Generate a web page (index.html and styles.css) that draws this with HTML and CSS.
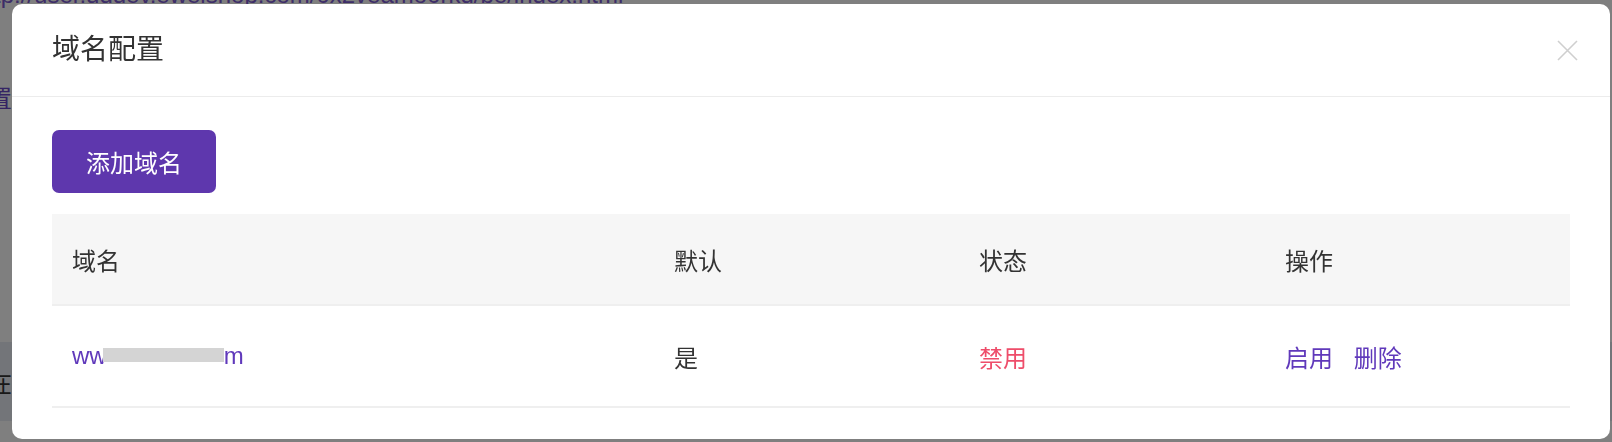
FILE: index.html
```html
<!DOCTYPE html>
<html>

<head>
    <meta charset="utf-8">
    <title>域名配置</title>
    <link rel="stylesheet" href="styles.css">
</head>

<body>
    <div class="page">
        <div class="page-url">http://user.dddev.eweishop.com/0x2veamo0rkd/be/index.html</div>
        <div class="page-nav">设置</div>
        <div class="page-row"><span>存在</span></div>
    </div>

    <div class="mask"></div>

    <div class="modal">
        <div class="modal-header">
            <h2 class="modal-title">域名配置</h2>
            <a class="modal-close" href="#">
                <svg width="21" height="21" viewBox="0 0 21 21">
                    <path d="M1 1 L20 20 M20 1 L1 20" stroke="#cfcfcf" stroke-width="1.6" fill="none" />
                </svg>
            </a>
        </div>

        <div class="modal-body">
            <button class="but add">添加域名</button>

            <table class="table">
                <colgroup>
                    <col style="width: 602px">
                    <col style="width: 305px">
                    <col style="width: 306px">
                    <col>
                </colgroup>
                <thead>
                    <tr>
                        <th>域名</th>
                        <th>默认</th>
                        <th>状态</th>
                        <th>操作</th>
                    </tr>
                </thead>
                <tbody>
                    <tr>
                        <td><a class="link" href="#">ww<span class="blur"></span>m</a></td>
                        <td>是</td>
                        <td><span class="off">禁用</span></td>
                        <td>
                            <a class="link" href="#">启用</a>
                            <a class="link act" href="#">删除</a>
                        </td>
                    </tr>
                </tbody>
            </table>
        </div>
    </div>
</body>

</html>
```

FILE: styles.css
```css
body {
    margin: 0;
    padding: 0;
    height: 442px;
    overflow: hidden;
    background-color: #ffffff;
    font-family: "Liberation Sans", "Noto Sans CJK SC", sans-serif;
}

/* page behind the dialog */

.page {
    display: flex;
    flex-direction: column;
}

.page-url {
    margin: -17px 0 0 -26px;
    font-size: 24px;
    line-height: 24px;
    color: #7a5ad0;
    white-space: nowrap;
}

.page-nav {
    margin: 78px 0 0 -36px;
    font-size: 24px;
    line-height: 28px;
    color: #6a48c8;
}

.page-row {
    margin-top: 229px;
    height: 79px;
    display: flex;
    align-items: center;
    background-color: #e6ebf3;
    font-size: 24px;
    color: #333333;
}

.page-row span {
    margin-left: -36px;
}

.mask {
    position: fixed;
    top: 0;
    left: 0;
    right: 0;
    bottom: 0;
    background-color: rgba(0, 0, 0, 0.5);
}

/* dialog */

.modal {
    position: fixed;
    left: 12px;
    top: 4px;
    width: 1598px;
    height: 435px;
    background-color: #ffffff;
    border-radius: 10px;
    overflow: hidden;
}

.modal-header {
    height: 92px;
    border-bottom: 1px solid #ececec;
    display: flex;
    align-items: center;
    justify-content: space-between;
    padding: 0 32px 0 40px;
}

.modal-title {
    margin: 0;
    font-size: 28px;
    font-weight: normal;
    color: #333333;
    line-height: 36px;
}

.modal-close {
    display: block;
    width: 21px;
    height: 21px;
}

.modal-close svg {
    display: block;
}

.modal-body {
    padding: 33px 40px 0 40px;
}

/* buttons */

.but {
    border: none;
    border-radius: 7px;
    font-family: "Liberation Sans", "Noto Sans CJK SC", sans-serif;
    cursor: pointer;
}

.add {
    display: block;
    width: 164px;
    height: 63px;
    background-color: #5e37ad;
    color: #ffffff;
    font-size: 24px;
    padding: 0;
}

/* TABLE */

.table {
    margin-top: 21px;
    width: 100%;
    border-collapse: collapse;
    table-layout: fixed;
}

.table th {
    height: 90px;
    padding: 0 20px;
    text-align: left;
    font-weight: normal;
    font-size: 24px;
    color: #333333;
    background-color: #f6f6f6;
    border-bottom: 2px solid #efefef;
}

.table td {
    height: 100px;
    padding: 0 20px;
    font-size: 24px;
    color: #333333;
    border-bottom: 2px solid #efefef;
}

.link {
    color: #6039bb;
    text-decoration: none;
}

.act {
    margin-left: 14px;
}

.off {
    color: #ee4d6a;
}

.blur {
    display: inline-block;
    width: 121px;
    height: 14px;
    margin-left: -4px;
    vertical-align: 2px;
    background-color: #d4d4d4;
}
```
